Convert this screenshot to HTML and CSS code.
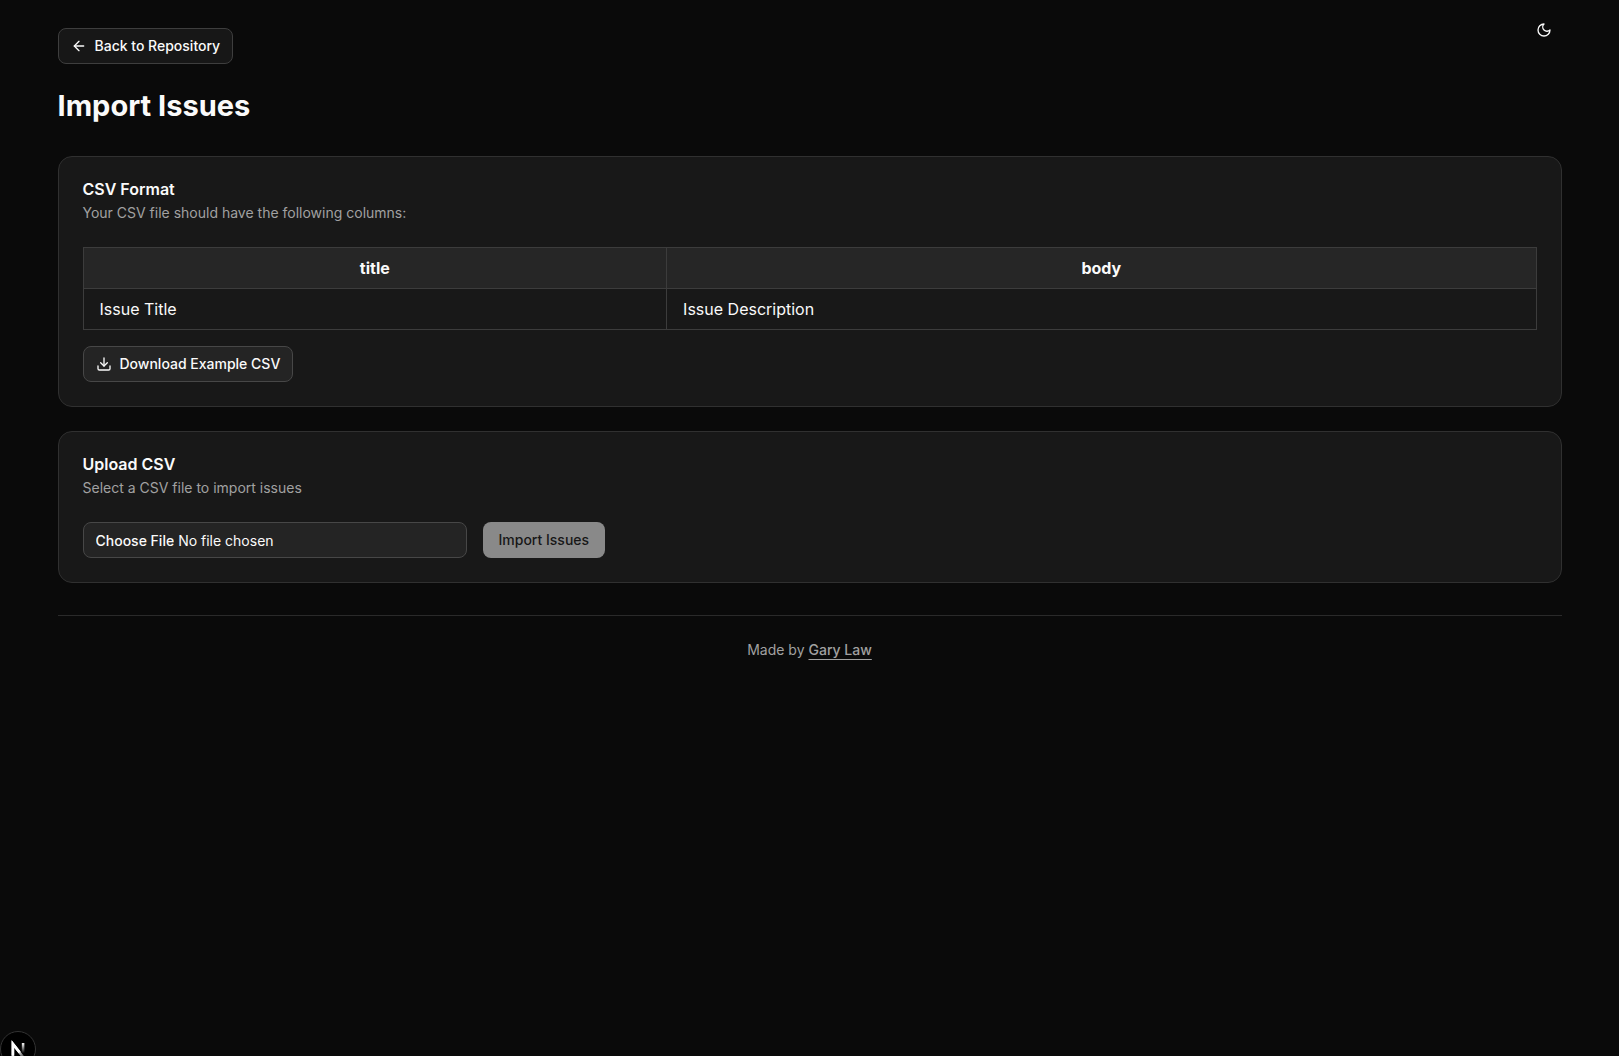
FILE: index.html
```html
<!DOCTYPE html>
<html lang="en">
<head>
  <meta charset="UTF-8" />
  <meta name="viewport" content="width=device-width, initial-scale=1.0"/>
  <title>Import Issues</title>
  <link rel="stylesheet" href="styles.css">
</head>
<body>
  <div class="container">
    <header class="topbar">
      <a class="btn btn-outline back" href="#">
        <svg class="icon" viewBox="0 0 24 24"><path d="m12 19-7-7 7-7"/><path d="M19 12H5"/></svg>
        Back to Repository
      </a>
      <button class="theme-toggle" type="button" aria-label="Toggle theme">
        <svg class="icon" viewBox="0 0 24 24"><path d="M12 3a6 6 0 0 0 9 9 9 9 0 1 1-9-9Z"/></svg>
      </button>
    </header>

    <main>
      <h1>Import Issues</h1>

      <section class="card">
        <h2>CSV Format</h2>
        <p class="description">Your CSV file should have the following columns:</p>
        <table>
          <thead>
            <tr>
              <th>title</th>
              <th>body</th>
            </tr>
          </thead>
          <tbody>
            <tr>
              <td>Issue Title</td>
              <td>Issue Description</td>
            </tr>
          </tbody>
        </table>
        <button class="btn btn-outline btn-raised" type="button">
          <svg class="icon" viewBox="0 0 24 24"><path d="M21 15v4a2 2 0 0 1-2 2H5a2 2 0 0 1-2-2v-4"/><path d="m7 10 5 5 5-5"/><path d="M12 15V3"/></svg>
          Download Example CSV
        </button>
      </section>

      <section class="card">
        <h2>Upload CSV</h2>
        <p class="description" id="upload-label">Select a CSV file to import issues</p>
        <form class="upload">
          <input class="file-input" type="file" accept=".csv" aria-labelledby="upload-label">
          <button class="btn btn-primary" type="submit" disabled>Import Issues</button>
        </form>
      </section>
    </main>

    <footer>
      Made by <a href="#">Gary Law</a>
    </footer>
  </div>

  <button class="dev-badge" type="button" aria-label="Open dev tools">
    <svg viewBox="0 0 40 40">
      <defs>
        <linearGradient id="fade-diagonal" x1="20" y1="22" x2="28" y2="33" gradientUnits="userSpaceOnUse">
          <stop stop-color="#fff"/>
          <stop offset="1" stop-color="#fff" stop-opacity="0"/>
        </linearGradient>
        <linearGradient id="fade-stem" x1="0" y1="13" x2="0" y2="25" gradientUnits="userSpaceOnUse">
          <stop stop-color="#fff"/>
          <stop offset="1" stop-color="#fff" stop-opacity="0"/>
        </linearGradient>
      </defs>
      <path d="M14 28V14L28 32" stroke="url(#fade-diagonal)"/>
      <path d="M14 28V14l8 10" stroke="#fff"/>
      <path d="M26 13v13" stroke="url(#fade-stem)"/>
    </svg>
  </button>
</body>
</html>
```
FILE: styles.css
```css
* {
  box-sizing: border-box;
}

body {
  margin: 0;
  background: #0a0a0a;
  color: #fafafa;
  font-family: Inter, sans-serif;
  font-size: 16px;
  line-height: 24px;
}

.container {
  max-width: 1536px;
  margin: 0 auto;
  padding: 12px 16px;
}

.topbar {
  display: flex;
  justify-content: space-between;
  align-items: flex-start;
}

.back {
  margin-top: 16px;
}

.icon {
  width: 16px;
  height: 16px;
  fill: none;
  stroke: currentColor;
  stroke-width: 2;
  stroke-linecap: round;
  stroke-linejoin: round;
}

.btn {
  display: inline-flex;
  align-items: center;
  justify-content: center;
  gap: 8px;
  height: 36px;
  padding: 0 12px;
  border: 1px solid transparent;
  border-radius: 8px;
  color: #fafafa;
  font-family: inherit;
  font-size: 14px;
  font-weight: 500;
  line-height: 20px;
  text-decoration: none;
  white-space: nowrap;
}

.btn-outline {
  background: #171717;
  border-color: #3e3e3e;
}

.btn-raised {
  background: #242424;
  border-color: #474747;
}

.btn-primary {
  padding: 0 16px;
  border: 0;
  background: #fafafa;
  color: #171717;
}

.btn-primary:disabled {
  opacity: 0.5;
}

.theme-toggle {
  display: flex;
  align-items: center;
  justify-content: center;
  width: 36px;
  height: 36px;
  padding: 0;
  border: 0;
  border-radius: 8px;
  background: none;
  color: #fafafa;
}

h1 {
  margin: 24px 0 32px;
  font-size: 29px;
  font-weight: 700;
  line-height: 36px;
}

.card {
  margin-bottom: 24px;
  padding: 24px;
  border: 1px solid #303030;
  border-radius: 14px;
  background: #181818;
}

.card:last-child {
  margin-bottom: 32px;
}

h2 {
  margin: 0 0 6px;
  font-size: 16px;
  font-weight: 600;
  line-height: 16px;
}

.description {
  margin: 0 0 24px;
  color: #a1a1a1;
  font-size: 14px;
  line-height: 20px;
}

table {
  width: 100%;
  margin-bottom: 16px;
  border-collapse: collapse;
}

thead {
  background: #262626;
}

th, td {
  padding: 8px 16px;
  border: 1px solid #3c3c3c;
}

.upload {
  display: flex;
  gap: 16px;
}

.file-input {
  width: 100%;
  max-width: 384px;
  height: 36px;
  padding: 3px 12px;
  border: 1px solid #474747;
  border-radius: 8px;
  background: #242424;
  color: #fafafa;
  font-family: inherit;
  font-size: 14px;
  line-height: 20px;
}

.file-input::file-selector-button {
  height: 28px;
  padding: 0;
  border: 0;
  background: transparent;
  color: #fafafa;
  font-family: inherit;
  font-size: 14px;
  font-weight: 500;
}

footer {
  padding: 24px 0;
  border-top: 1px solid #2a2a2a;
  color: #a1a1a1;
  font-size: 14px;
  line-height: 20px;
  text-align: center;
}

footer a {
  color: inherit;
  font-weight: 500;
  text-underline-offset: 4px;
}

/* sits on the corner of the window, partly cut off */
.dev-badge {
  position: fixed;
  left: 0;
  bottom: -11px;
  width: 36px;
  height: 36px;
  padding: 0;
  border: 1px solid #333;
  border-radius: 50%;
  background: #000;
}

.dev-badge svg {
  display: block;
  width: 100%;
  fill: none;
  stroke-width: 3;
}
```
